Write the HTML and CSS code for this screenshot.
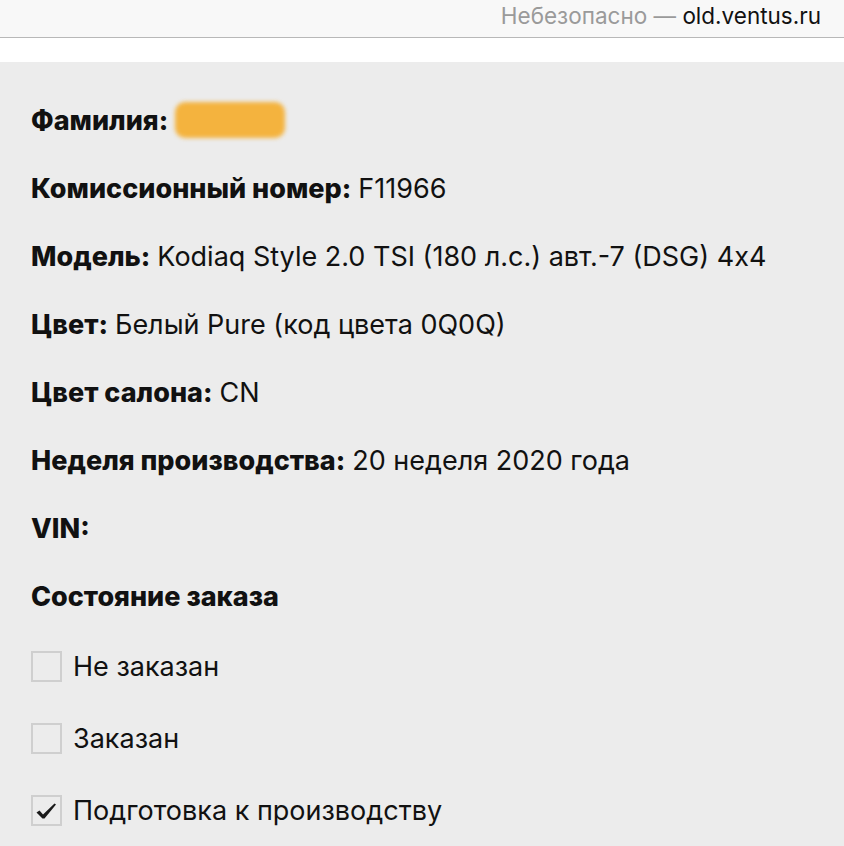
FILE: index.html
```html
<!DOCTYPE html>
<html lang="ru">
<head>
<meta charset="utf-8">
<link rel="stylesheet" href="styles.css">
</head>
<body>
<header class="topbar">
  <span class="insecure">Небезопасно — </span><span class="domain">old.ventus.ru</span>
</header>
<div class="spacer"></div>
<main class="content">
  <p class="row"><b>Фамилия:</b> <span class="blob"></span></p>
  <p class="row"><b>Комиссионный номер:</b> F11966</p>
  <p class="row"><b>Модель:</b> Kodiaq Style 2.0 TSI (180 л.с.) авт.-7 (DSG) 4x4</p>
  <p class="row"><b>Цвет:</b> Белый Pure (код цвета 0Q0Q)</p>
  <p class="row"><b>Цвет салона:</b> CN</p>
  <p class="row"><b>Неделя производства:</b> 20 неделя 2020 года</p>
  <p class="row"><b>VIN:</b></p>
  <p class="row"><b>Состояние заказа</b></p>
  <div class="check"><span class="box"></span>Не заказан</div>
  <div class="check"><span class="box"></span>Заказан</div>
  <div class="check"><span class="box"><svg class="tick" viewBox="0 0 30 30" width="30" height="30"><path d="M4.5 17.5 L7.5 15.5 L11 19.5 L22.5 8.5 L24 9.5 L12.5 23.5 L10.5 23.5 Z" fill="#1a1a1a"/></svg></span>Подготовка к производству</div>
</main>
</body>
</html>
```
FILE: styles.css
```css
html, body { margin: 0; padding: 0; }
body {
  background: #ffffff;
  font-family: "Inter", "Lato", sans-serif;
  color: #111;
  overflow: hidden;
}
.topbar {
  height: 38px;
  box-sizing: border-box;
  background: #f8f8f8;
  border-bottom: 1px solid #b8b8b8;
  display: flex;
  justify-content: flex-end;
  align-items: center;
  padding-right: 23px;
  font-family: "Inter", "Liberation Sans", sans-serif;
  font-size: 22.5px;
  padding-bottom: 6px;
}
.insecure { color: #9a9a9a; white-space: pre; }
.domain { color: #111; }
.spacer { height: 24px; }
.content {
  background: #ececec;
  padding: 0 0 0 31px;
  font-size: 27px;
  min-height: 800px;
  padding-top: 24px;
}
.row {
  margin: 0;
  height: 68px;
  display: flex;
  align-items: center;
  gap: 7px;
}
.row b { font-weight: 800; }
.blob {
  display: inline-block;
  width: 110px;
  height: 36px;
  background: #f4b33e;
  border-radius: 10px;
  filter: blur(2px);
}
.check {
  height: 72px;
  display: flex;
  align-items: center;
  gap: 11px;
}
.box {
  width: 31px;
  height: 31px;
  box-sizing: border-box;
  border: 2px solid #cfcfcf;
  background: #ececec;
  display: flex;
  align-items: center;
  justify-content: center;
  overflow: visible;
}
.tick { display: block; flex: none; }
```
